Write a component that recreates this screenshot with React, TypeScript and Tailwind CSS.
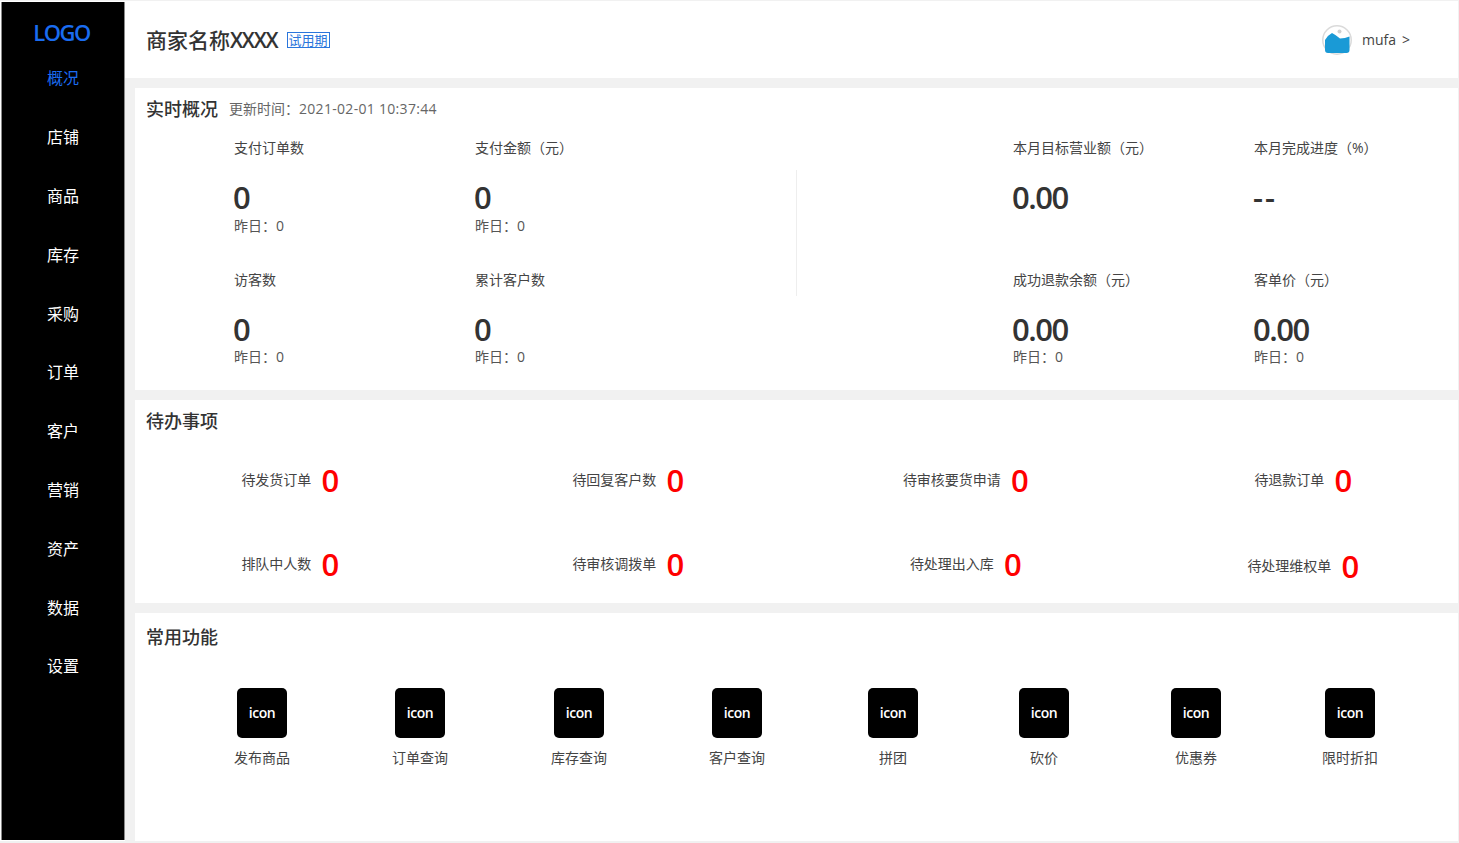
const menus = ['概况', '店铺', '商品', '库存', '采购', '订单', '客户', '营销', '资产', '数据', '设置']

const leftStats = [
    {label: '支付订单数', value: '0', sub: '昨日：0'},
    {label: '支付金额（元）', value: '0', sub: '昨日：0'},
    {label: '访客数', value: '0', sub: '昨日：0'},
    {label: '累计客户数', value: '0', sub: '昨日：0'},
]

const rightStats = [
    {label: '本月目标营业额（元）', value: '0.00', sub: ''},
    {label: '本月完成进度（%）', value: '--', sub: ''},
    {label: '成功退款余额（元）', value: '0.00', sub: '昨日：0'},
    {label: '客单价（元）', value: '0.00', sub: '昨日：0'},
]

const todos = ['待发货订单', '待回复客户数', '待审核要货申请', '待退款订单', '排队中人数', '待审核调拨单', '待处理出入库', '待处理维权单']

const tools = ['发布商品', '订单查询', '库存查询', '客户查询', '拼团', '砍价', '优惠券', '限时折扣']

const Stat = ({label, value, sub, top}: {label: string, value: string, sub: string, top: boolean}) => (
    <div className="h-[132px] pt-[8px] text-[#333]">
        <div className="h-[20px] text-[14px] leading-[20px] text-[#444]">{label}</div>
        <div className={`-ml-[1px] mt-[22px] h-[34px] text-[31px] leading-[34px] font-semibold ${value == '--' ? 'tracking-[2px]' : 'tracking-[-1.5px]'}`}>{value}</div>
        <div className={`${top ? 'mt-[2px]' : 'mt-[1px]'} h-[20px] text-[14px] leading-[20px] text-[#555]`}>{sub}</div>
    </div>
)

const Avatar = () => (
    <svg width="30" height="30" viewBox="0 0 30 30">
        <circle cx="15" cy="15" r="14.25" fill="#fff" stroke="#dadada" strokeWidth="1.5"/>
        <circle cx="17.500" cy="6.500" r="2" fill="#d0d0d0"/>
        <path d="M3 15 Q6 10 10 8 Q14 10 18 13.500 Q23 13.500 27.500 11.500 L27.500 25 Q27.500 28 24.500 28 L6 28 Q3 28 3 25 Z" fill="#1a9ad6"/>
    </svg>
)

export default function App() {
    return (
        <div className="flex h-[843px] w-[1459px] overflow-hidden bg-[#f1f1f1] pt-[1px] pb-[2px] pr-[1px] font-['Open_Sans','Noto_Sans_CJK_SC',sans-serif]">
            <div className="w-[125px] shrink-0 bg-white pl-[1px]">
                <div className="mt-[1px] h-[838px] border-x border-x-[#8a8a8a] bg-black">
                    <div className="h-[47px] pt-[16px] pr-[3px] text-center text-[22px] leading-[28px] font-semibold tracking-[-1.5px] text-[#1a6cf0]">LOGO</div>
                    {menus.map((menu, index) => (
                        <div key={menu} className={`flex h-[58.8px] items-center justify-center text-[16px] ${index == 0 ? 'text-[#1a6cf0]' : 'text-white'}`}>
                            {menu}
                        </div>
                    ))}
                </div>
            </div>
            <div className="flex min-w-0 grow flex-col">
                <div className="flex h-[77px] shrink-0 items-center justify-between bg-white pl-[21px] pr-[48px]">
                    <div className="flex items-center">
                        <span className="translate-y-[1px] text-[21px] font-medium text-[#333]">商家名称<span className="font-semibold tracking-[-1.2px]">XXXX</span></span>
                        <span className="ml-[9px] border border-[#2a76dc] px-[1px] text-[13px] leading-[14px] text-[#2a76dc]">试用期</span>
                    </div>
                    <div className="flex items-center text-[14px] text-[#444]">
                        <Avatar/>
                        <span className="ml-[10px]">mufa</span>
                        <span className="ml-[6px]">&gt;</span>
                    </div>
                </div>
                <div className="mt-[10px] ml-[10px] h-[302px] shrink-0 bg-white">
                    <div className="flex h-[42px] items-center pl-[11px]">
                        <span className="text-[18px] font-medium text-[#333]">实时概况</span>
                        <span className="ml-[11px] -translate-y-[1px] text-[14px] text-[#666]">
                            更新时间：<span className="tracking-[0.3px]">2021-02-01 10:37:44</span>
                        </span>
                    </div>
                    <div className="flex">
                        <div className="relative w-[662px] shrink-0 pl-[99px]">
                            <div className="grid grid-cols-[241px_241px]">
                                {leftStats.map((stat, index) => <Stat key={stat.label} top={index < 2} {...stat}/>)}
                            </div>
                            <div className="absolute top-[40px] right-0 h-[126px] w-px bg-[#eee]"/>
                        </div>
                        <div className="grid grid-cols-[241px_204px] pl-[216px]">
                            {rightStats.map((stat, index) => <Stat key={stat.label} top={index < 2} {...stat}/>)}
                        </div>
                    </div>
                </div>
                <div className="mt-[10px] ml-[10px] h-[203px] shrink-0 bg-white">
                    <div className="h-[38px] pt-[8px] pl-[11px] text-[18px] leading-[26px] font-medium text-[#333]">待办事项</div>
                    <div className="grid grid-cols-[309px_367px_308px_367px] grid-rows-[84px_84px]">
                        {todos.map((todo, index) => (
                            <div key={todo} className={`flex items-center justify-center ${index == 7 ? 'pt-[4px]' : ''}`}>
                                <span className="-translate-y-[1px] text-[14px] text-[#444]">{todo}</span>
                                <span className="ml-[10px] text-[31px] leading-[40px] font-semibold tracking-[-1.5px] text-[#ff0000]">0</span>
                            </div>
                        ))}
                    </div>
                </div>
                <div className="mt-[10px] ml-[10px] min-h-0 grow bg-white">
                    <div className="flex h-[48px] items-center pl-[11px] text-[18px] font-medium text-[#333]">常用功能</div>
                    <div className="mt-[27px] grid grid-cols-[158px_158px_160px_156px_156px_146px_158px_150px] pl-[48px]">
                        {tools.map(tool => (
                            <div key={tool} className="flex flex-col items-center">
                                <div className="flex h-[50px] w-[50px] items-center justify-center rounded-[5px] bg-black pb-[2px] text-[14px] font-semibold tracking-[-0.5px] text-white">icon</div>
                                <div className="mt-[10px] text-[14px] leading-[20px] text-[#444]">{tool}</div>
                            </div>
                        ))}
                    </div>
                </div>
            </div>
        </div>
    )
}
